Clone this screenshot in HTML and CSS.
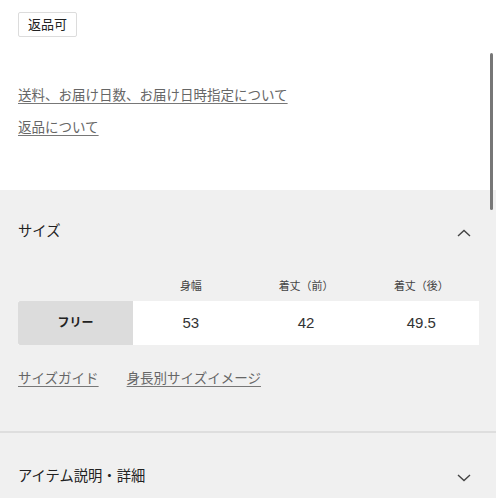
FILE: index.html
```html
<!DOCTYPE html>
<html lang="ja">
<head>
<meta charset="utf-8">
<link rel="stylesheet" href="styles.css">
</head>
<body>
<div class="page">
  <section class="top">
    <span class="badge">返品可</span>
    <a class="link first" href="#">送料、お届け日数、お届け日時指定について</a>
    <a class="link second" href="#">返品について</a>
  </section>
  <section class="panel size">
    <div class="panel-head">
      <span class="panel-title">サイズ</span>
      <svg class="chev" width="14" height="8" viewBox="0 0 14 8"><path d="M1 7 L7 1.5 L13 7" fill="none" stroke="#444" stroke-width="1.4"/></svg>
    </div>
    <div class="size-table">
      <div class="labels">
        <span></span><span>身幅</span><span>着丈（前）</span><span>着丈（後）</span>
      </div>
      <div class="row">
        <span class="name">フリー</span><span>53</span><span>42</span><span>49.5</span>
      </div>
    </div>
    <div class="size-links">
      <a class="link" href="#">サイズガイド</a>
      <a class="link" href="#">身長別サイズイメージ</a>
    </div>
  </section>
  <section class="panel detail">
    <div class="panel-head">
      <span class="panel-title">アイテム説明・詳細</span>
      <svg class="chev" width="14" height="8" viewBox="0 0 14 8"><path d="M1 1 L7 6.5 L13 1" fill="none" stroke="#444" stroke-width="1.4"/></svg>
    </div>
  </section>
  <div class="scrollbar"></div>
</div>
</body>
</html>
```
FILE: styles.css
```css
html, body { margin: 0; padding: 0; background: #fff; }
body {
  font-family: "Liberation Sans", "Noto Sans CJK JP", sans-serif;
  color: #333;
  width: 498px;
  height: 498px;
  overflow: hidden;
}
.page { position: relative; width: 496px; }
.top {
  padding: 12px 18px 52px 18px;
  display: flex;
  flex-direction: column;
  align-items: flex-start;
}
.badge {
  display: inline-block;
  height: 23px;
  line-height: 23px;
  padding: 0 9px;
  border: 1px solid #dcdcdc;
  border-radius: 2px;
  font-size: 13px;
  color: #222;
}
.link {
  color: #666;
  font-size: 13.5px;
  line-height: 20px;
  text-decoration: underline;
  text-underline-offset: 3px;
  text-decoration-color: #777;
}
.top .first { margin-top: 49px; }
.top .second { margin-top: 12px; }
.panel {
  background: #f0f0f0;
  padding: 0 17px 0 18px;
}
.size { padding-top: 31px; padding-bottom: 42px; border-bottom: 2px solid #dedede; }
.detail { padding-top: 33px; height: 40px; }
.panel-head {
  display: flex;
  justify-content: space-between;
  align-items: center;
  height: 20px;
  padding-right: 8px;
}
.panel-title { font-size: 14.3px; line-height: 20px; color: #222; }
.chev { display: block; margin-top: 3px; }
.size-table { margin-top: 37px; }
.labels, .row {
  display: grid;
  grid-template-columns: repeat(4, 1fr);
  text-align: center;
}
.labels span { font-size: 11px; line-height: 16px; color: #444; }
.row {
  margin-top: 7px;
  height: 44px;
  background: #fff;
  align-items: center;
}
.row span { font-size: 15px; line-height: 44px; color: #333; }
.row .name {
  background: #dcdcdc;
  font-size: 12px;
  font-weight: bold;
  color: #222;
  border-radius: 2px 0 0 2px;
}
.size-links { margin-top: 24px; display: flex; gap: 28px; }
.scrollbar {
  position: absolute;
  left: 490px;
  top: 53px;
  width: 3px;
  height: 157px;
  background: #777;
  border-radius: 2px;
}
```
